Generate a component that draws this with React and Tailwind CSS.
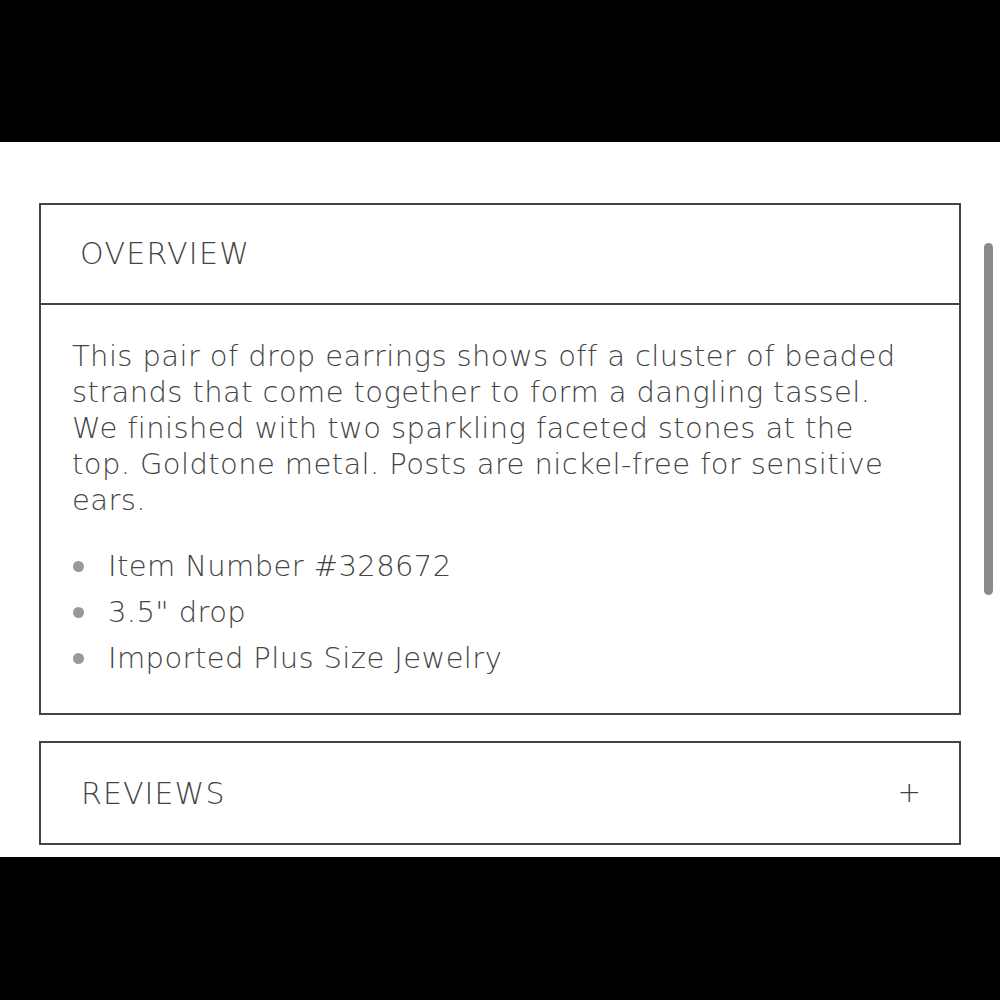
export default function App() {
  const font = { fontFamily: '"DejaVu Sans", sans-serif' };
  return (
    <div className="relative w-[1000px] h-[1000px] bg-black" style={font}>
      <div className="h-[142px] bg-black" />
      <div className="h-[715px] bg-white px-[39px] pt-[61px]">
        <div className="border-2 border-[#444] h-[512px] flex flex-col">
          <div className="h-[100px] border-b-2 border-[#444] flex items-center pl-[39px] pb-[2px]">
            <span className="text-[30px] font-extralight text-[#444] tracking-[1.3px]">OVERVIEW</span>
          </div>
          <div className="pl-[31px] pt-[33px]">
            <p className="text-[29px] leading-[36px] font-extralight text-[#444] tracking-[0.4px]">
              This pair of drop earrings shows off a cluster of beaded<br />
              strands that come together to form a dangling tassel.<br />
              We finished with two sparkling faceted stones at the<br />
              top. Goldtone metal. Posts are nickel-free for sensitive<br />
              ears.
            </p>
            <ul className="mt-[25px] text-[29px] leading-[46px] font-extralight text-[#444] tracking-[0.4px]">
              {["Item Number #328672", '3.5" drop', "Imported Plus Size Jewelry"].map((t) => (
                <li key={t} className="flex items-center">
                  <span className="w-[11px] h-[11px] rounded-full bg-[#999] ml-[1px] mr-[24px]" />
                  {t}
                </li>
              ))}
            </ul>
          </div>
        </div>
        <div className="mt-[26px] border-2 border-[#444] h-[104px] flex items-center justify-between pl-[40px] pr-[38px]">
          <span className="text-[30px] font-extralight text-[#444] tracking-[1.1px]">REVIEWS</span>
          <span className="text-[28px] font-extralight text-[#444]">+</span>
        </div>
      </div>
      <div className="absolute left-[984px] top-[243px] w-[9px] h-[352px] rounded-full bg-[#8a8a8a]" />
    </div>
  );
}
